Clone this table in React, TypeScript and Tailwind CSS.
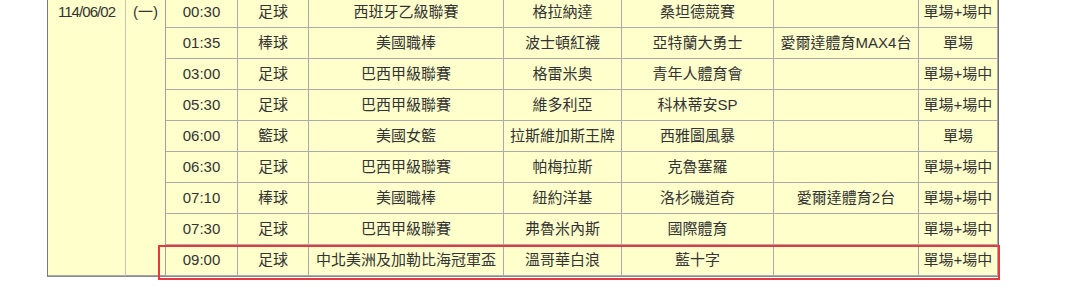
import React from "react";

type Row = [string, string, string, string, string, string, string];

const rows: Row[] = [
  ["00:30", "足球", "西班牙乙級聯賽", "格拉納達", "桑坦德競賽", "", "單場+場中"],
  ["01:35", "棒球", "美國職棒", "波士頓紅襪", "亞特蘭大勇士", "愛爾達體育MAX4台", "單場"],
  ["03:00", "足球", "巴西甲級聯賽", "格雷米奥", "青年人體育會", "", "單場+場中"],
  ["05:30", "足球", "巴西甲級聯賽", "維多利亞", "科林蒂安SP", "", "單場+場中"],
  ["06:00", "籃球", "美國女籃", "拉斯維加斯王牌", "西雅圖風暴", "", "單場"],
  ["06:30", "足球", "巴西甲級聯賽", "帕梅拉斯", "克魯塞羅", "", "單場+場中"],
  ["07:10", "棒球", "美國職棒", "紐約洋基", "洛杉磯道奇", "愛爾達體育2台", "單場+場中"],
  ["07:30", "足球", "巴西甲級聯賽", "弗魯米內斯", "國際體育", "", "單場+場中"],
  ["09:00", "足球", "中北美洲及加勒比海冠軍盃", "溫哥華白浪", "藍十字", "", "單場+場中"],
];

const cell =
  "bg-[#ffffcc] border-r border-b border-[#ababab] text-center align-middle px-[4px] py-0 leading-[30px] whitespace-nowrap";

export default function App() {
  return (
    <div className="w-[1080px] h-[299px] bg-white overflow-hidden">
      <div
        className="relative ml-[47px] -mt-[4px] w-[951px]"
        style={{}}
      >
        <table
          className="table-fixed border-separate border-spacing-0 w-[952px] border-l border-t border-r border-b border-l-[#7a7a7a] border-t-[#ababab] border-r-[#6e6e6e] border-b-[#8c8c8c] text-[15px] text-[#333333]"
          style={{ fontFamily: '"Liberation Sans", "Noto Sans CJK TC", sans-serif' }}
        >
          <colgroup>
            <col className="w-[78px]" />
            <col className="w-[40px]" />
            <col className="w-[72px]" />
            <col className="w-[71px]" />
            <col className="w-[195px]" />
            <col className="w-[118px]" />
            <col className="w-[152px]" />
            <col className="w-[145px]" />
            <col className="w-[79px]" />
          </colgroup>
          <tbody>
            {rows.map((r, i) => (
              <tr key={i} className="h-[31px]">
                {i === 0 && (
                  <>
                    <td
                      rowSpan={rows.length}
                      className="bg-[#ffffcc] border-r border-b border-r-[#c6c6b6] border-b-[#ababab] text-center align-top px-0 leading-[30px] whitespace-nowrap tracking-[-0.95px]"
                    >
                      114/06/02
                    </td>
                    <td
                      rowSpan={rows.length}
                      className="bg-[#ffffcc] border-r border-b border-[#a0a0a0] text-center align-top px-0 leading-[30px] whitespace-nowrap"
                    >
                      (一)
                    </td>
                  </>
                )}
                {r.map((c, j) => (
                  <td key={j} className={cell}>
                    {c}
                  </td>
                ))}
              </tr>
            ))}
          </tbody>
        </table>
        <div className="absolute left-[111px] top-[249px] w-[842px] h-[35px] border-2 border-[#e8383d] pointer-events-none" />
      </div>
    </div>
  );
}
